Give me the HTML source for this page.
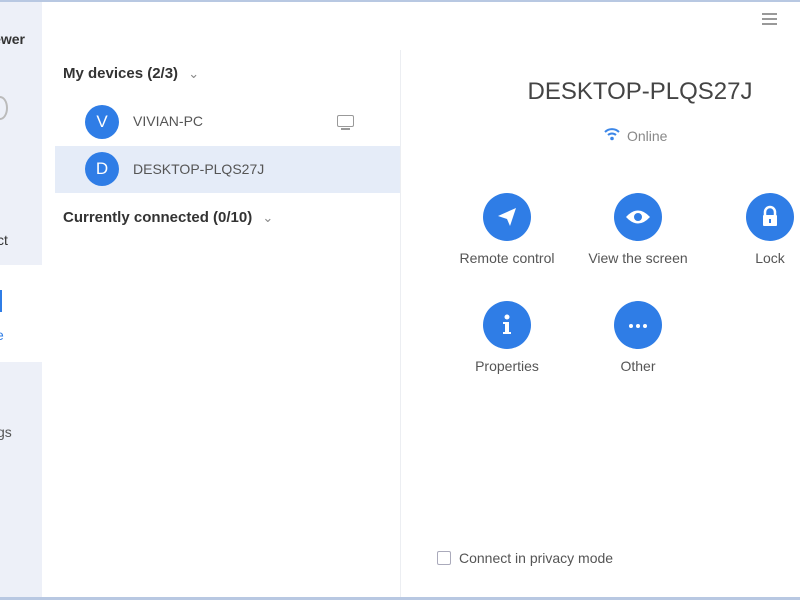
<!DOCTYPE html>
<html><head><style>
*{margin:0;padding:0;box-sizing:border-box}
body{width:800px;height:600px;overflow:hidden;background:#fff;font-family:"Liberation Sans",sans-serif;position:relative;color:#333}
.a{position:absolute}
.side{left:0;width:42px;background:#edf0f8}
.btn{width:48px;height:48px;border-radius:50%;background:#2f7de6}
.lbl{font-size:14px;color:#555;text-align:center;width:140px}
.av{width:34px;height:34px;border-radius:50%;background:#2f7de6;color:#fff;font-size:17px;text-align:center;line-height:34px}
</style></head><body>
<div class="a" style="left:0;top:0;width:800px;height:2px;background:#b8c8e2"></div>
<div class="a side" style="top:2px;height:263px"></div>
<div class="a side" style="top:362px;height:235px"></div>
<div class="a" style="left:-75px;width:100px;text-align:right;top:31px;font-size:14px;font-weight:bold;color:#333">Viewer</div>
<div class="a" style="left:-8px;top:96px;width:16px;height:24px;border:2px solid #bbb;border-radius:50%"></div>
<div class="a" style="left:-3px;top:232px;font-size:14px;color:#333">ct</div>
<div class="a" style="left:0;top:290px;width:2px;height:22px;background:#2f7de6"></div>
<div class="a" style="left:-4px;top:327px;font-size:14px;color:#2f7de6">e</div>
<div class="a" style="left:-3px;top:424px;font-size:14px;color:#555">gs</div>
<div class="a" style="left:0;top:597px;width:800px;height:3px;background:#b8c8e2"></div>
<div class="a" style="left:400px;top:50px;width:1px;height:547px;background:#eceef2"></div>
<div class="a" style="left:762px;top:13px;width:15px;height:2px;background:#999;box-shadow:0 5px 0 #999,0 10px 0 #999"></div>

<div class="a" style="left:63px;top:65px;font-size:15px;font-weight:bold;color:#333">My devices (2/3) <span style="font-weight:normal;color:#888;margin-left:6px;font-size:13px">&#8964;</span></div>
<div class="a av" style="left:85px;top:105px">V</div>
<div class="a" style="left:133px;top:113px;font-size:14px;color:#555">VIVIAN-PC</div>
<div class="a" style="left:337px;top:115px;width:17px;height:12px;border:1.5px solid #999;border-radius:2px"></div>
<div class="a" style="left:341px;top:128px;width:9px;height:1.5px;background:#999"></div>
<div class="a" style="left:55px;top:146px;width:345px;height:47px;background:#e5ecf8"></div>
<div class="a av" style="left:85px;top:152px">D</div>
<div class="a" style="left:133px;top:161px;font-size:14px;color:#555">DESKTOP-PLQS27J</div>
<div class="a" style="left:63px;top:209px;font-size:15px;font-weight:bold;color:#333">Currently connected (0/10) <span style="font-weight:normal;color:#888;margin-left:6px;font-size:13px">&#8964;</span></div>

<div class="a" style="left:500px;top:78px;width:280px;text-align:center;font-size:24px;color:#444">DESKTOP-PLQS27J</div>
<svg class="a" style="left:604px;top:127px" width="16" height="14" viewBox="0 0 16 14"><path d="M1 5 A10 10 0 0 1 15 5" stroke="#3b86e8" stroke-width="2" fill="none"/><path d="M4 8 A6 6 0 0 1 12 8" stroke="#3b86e8" stroke-width="2" fill="none"/><circle cx="8" cy="11.5" r="1.8" fill="#3b86e8"/></svg>
<div class="a" style="left:627px;top:128px;font-size:14px;color:#888">Online</div>

<div class="a btn" style="left:483px;top:193px"><svg width="48" height="48" viewBox="0 0 48 48"><path d="M15 23 L33 15 L27 33 L24 26 Z" fill="#fff"/></svg></div>
<div class="a lbl" style="left:437px;top:250px">Remote control</div>
<div class="a btn" style="left:614px;top:193px"><svg width="48" height="48" viewBox="0 0 48 48"><path d="M12 24 Q24 11 36 24 Q24 37 12 24Z" fill="#fff"/><circle cx="24" cy="24" r="4" fill="#2f7de6"/></svg></div>
<div class="a lbl" style="left:568px;top:250px">View the screen</div>
<div class="a btn" style="left:746px;top:193px"><svg width="48" height="48" viewBox="0 0 48 48"><path d="M19 23 V19 A5 5 0 0 1 29 19 V23" stroke="#fff" stroke-width="2.5" fill="none"/><rect x="17" y="22" width="14" height="11" rx="1" fill="#fff"/><rect x="23" y="26" width="2" height="4" fill="#2f7de6"/></svg></div>
<div class="a lbl" style="left:700px;top:250px">Lock</div>
<div class="a btn" style="left:483px;top:301px"><svg width="48" height="48" viewBox="0 0 48 48"><circle cx="24" cy="16" r="2.5" fill="#fff"/><path d="M20 21 H26 V31 H28 V33 H20 V31 H22 V23 H20Z" fill="#fff"/></svg></div>
<div class="a lbl" style="left:437px;top:358px">Properties</div>
<div class="a btn" style="left:614px;top:301px"><svg width="48" height="48" viewBox="0 0 48 48"><circle cx="17" cy="25" r="2" fill="#fff"/><circle cx="24" cy="25" r="2" fill="#fff"/><circle cx="31" cy="25" r="2" fill="#fff"/></svg></div>
<div class="a lbl" style="left:568px;top:358px">Other</div>

<div class="a" style="left:437px;top:551px;width:14px;height:14px;border:1.5px solid #aab;border-radius:2px"></div>
<div class="a" style="left:459px;top:550px;font-size:14px;color:#555">Connect in privacy mode</div>
</body></html>
